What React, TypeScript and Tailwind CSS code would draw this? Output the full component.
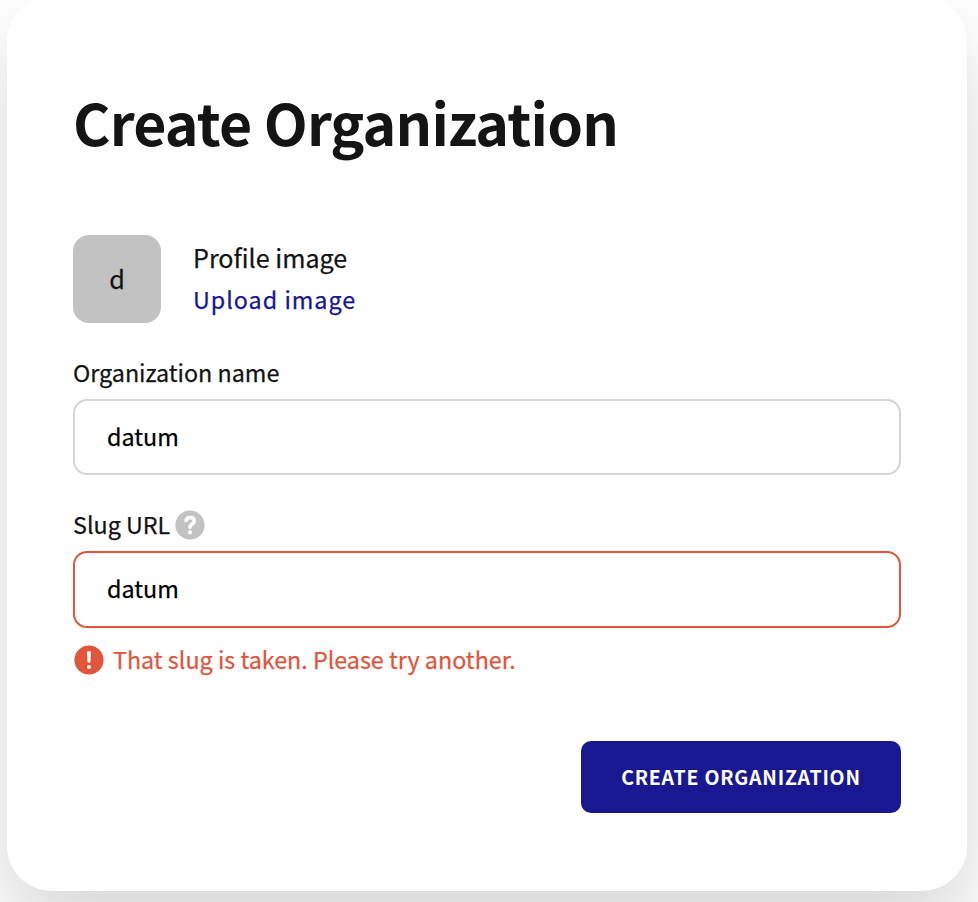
function HelpIcon() {
  return (
    <svg width="30" height="30" viewBox="0 0 30 30" fill="none">
      <circle cx="15" cy="15" r="14.6" fill="#c2c2c2" />
      <path d="M11.1 10.5C11.6 8.5 13.1 7.5 15.1 7.5C17.5 7.5 19.2 8.8 19.2 10.9C19.2 12.5 18.3 13.3 17 14.2C15.6 15.1 15 15.8 15 17.2" stroke="white" strokeWidth="3.6" strokeLinecap="round" strokeLinejoin="round" />
      <circle cx="15" cy="22.3" r="2.1" fill="white" />
    </svg>
  );
}

function AlertIcon() {
  return (
    <svg width="30" height="30" viewBox="0 0 30 30" fill="none">
      <circle cx="15" cy="15" r="14.6" fill="#e2553d" />
      <path d="M13.1 7.4Q13.1 6.3 14.2 6.3H15.8Q16.9 6.3 16.9 7.4L16.5 16.5Q16.4 17.8 15 17.8Q13.6 17.8 13.5 16.5Z" fill="white" />
      <circle cx="15" cy="22.1" r="2" fill="white" />
    </svg>
  );
}

export default function App() {
  return (
    <div className="flex h-[902px] w-[978px] items-end overflow-hidden bg-white pb-[11px] font-['Noto_Sans_CJK_SC','Noto_Sans',sans-serif] text-[#141414] [-webkit-text-stroke-width:0.25px]">
      <main className="ml-[7px] h-[895px] w-[960px] shrink-0 rounded-[45px] bg-white px-[66px] pt-[80px] shadow-[0_40px_80px_rgba(0,0,0,0.16)]">
        <h1 className="h-[90px] whitespace-nowrap text-[57.2px] font-bold leading-[90px] tracking-[-0.78px] [-webkit-text-stroke-width:0px]">Create Organization</h1>
        <section className="mt-[69px] flex h-[88px] items-center gap-8">
          <div className="flex size-[88px] items-center justify-center rounded-[16px] bg-[#c2c2c2] pb-px text-[25.2px]">d</div>
          <div className="pb-[2px] text-[25.1px] leading-[42px]">
            <p>Profile image</p>
            <a className="block text-[23.3px] tracking-[1px] text-[#171695]">Upload image</a>
          </div>
        </section>
        <label className="mt-[29px] block h-[41px] text-[23.3px] leading-[40px]">Organization name</label>
        <div className="mt-[6px] flex h-[76px] items-center rounded-[14px] border-2 border-[#d5d5d5] px-8 pb-px text-[23.3px] text-black">datum</div>
        <label className="mt-[30px] flex h-[40px] items-center gap-[5px] text-[23.3px]">
          <span className="pb-[2px]">Slug URL</span>
          <HelpIcon />
        </label>
        <div className="mt-[6px] flex h-[77px] items-center rounded-[14px] border-2 border-[#e2553d] px-8 pb-[2px] text-[23.3px] text-black">datum</div>
        <p className="mt-[12px] flex h-[40px] items-center gap-[9px] pl-px text-[23.3px] text-[#e2553d]">
          <AlertIcon />
          <span className="pb-[2px]">That slug is taken. Please try another.</span>
        </p>
        <div className="mt-[61px] flex justify-end">
          <button className="h-[72px] w-[320px] rounded-[10px] bg-[#1a1891] text-[19.5px] font-bold tracking-[0.8px] text-white [-webkit-text-stroke-width:0px]">CREATE ORGANIZATION</button>
        </div>
      </main>
    </div>
  );
}
